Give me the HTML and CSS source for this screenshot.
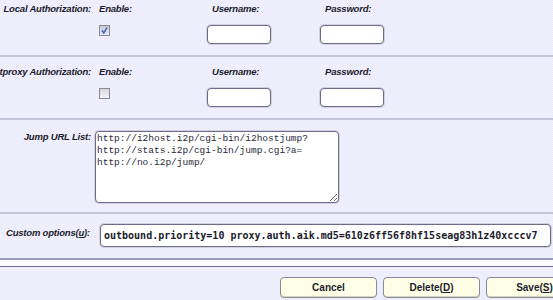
FILE: index.html
```html
<!DOCTYPE html>
<html lang="en">
<head>
  <meta charset="UTF-8">
  <title>Tunnel settings</title>
  <link rel="stylesheet" href="styles.css">
</head>
<body>
  <div class="form">
    <div class="row auth first">
      <div class="label">Local Authorization:</div>
      <div class="head">Enable:</div>
      <div class="head user">Username:</div>
      <div class="head pass">Password:</div>
      <div></div>
      <div class="cell">
        <span class="check on">
          <svg width="9" height="9" viewBox="0 0 9 9"><path d="M2 4.5 L3.8 7 L7 1.5" fill="none" stroke="#3355bb" stroke-width="1.4"/></svg>
        </span>
      </div>
      <div class="cell"><input type="text" class="text"></div>
      <div class="cell"><input type="password" class="text"></div>
    </div>

    <div class="row auth second">
      <div class="label">Outproxy Authorization:</div>
      <div class="head">Enable:</div>
      <div class="head user">Username:</div>
      <div class="head pass">Password:</div>
      <div></div>
      <div class="cell"><span class="check"></span></div>
      <div class="cell"><input type="text" class="text"></div>
      <div class="cell"><input type="password" class="text"></div>
    </div>

    <div class="row jump">
      <div class="label">Jump URL List:</div>
      <textarea class="urls" rows="6">http://i2host.i2p/cgi-bin/i2hostjump?
http://stats.i2p/cgi-bin/jump.cgi?a=
http://no.i2p/jump/</textarea>
    </div>

    <div class="row custom">
      <div class="label">Custom options(<u>u</u>):</div>
      <input type="text" class="options" value="outbound.priority=10 proxy.auth.aik.md5=610z6ff56f8hf15seag83h1z40xcccv7">
    </div>
  </div>

  <div class="bar"></div>

  <div class="buttons">
    <button>Cancel</button>
    <button>Delete(<u>D</u>)</button>
    <button>Save(<u>S</u>)</button>
  </div>
</body>
</html>
```

FILE: styles.css
```css
body {
  margin: 0;
  width: 553px;
  height: 300px;
  overflow: hidden;
  font-family: "Liberation Sans", Arial, sans-serif;
  color: #1c1c2c;
  background-color: #eeeeff;
  background-image: repeating-conic-gradient(#f3f3ff 0 25%, #e9e9fb 0 50%);
  background-size: 2px 2px;
}
.row {
  border-bottom: 2px solid #c4c4d8;
}
.auth {
  display: grid;
  grid-template-columns: 95px 112px 113px 1fr;
  row-gap: 10px;
}
.first {
  padding: 3px 0 11px;
}
.second {
  padding: 9px 0 11px;
}
.label, .head {
  font-size: 9.5px;
  font-weight: bold;
  font-style: italic;
  line-height: 12px;
  letter-spacing: -0.2px;
  white-space: nowrap;
}
.label {
  display: flex;
  justify-content: flex-end;
  padding-right: 4px;
}
.head {
  padding-left: 4px;
}
.head.user, .head.pass {
  padding-left: 5px;
}
.cell {
  height: 19px;
}
.auth .cell:nth-child(6) {
  padding-left: 4px;
}
.check {
  display: flex;
  align-items: center;
  justify-content: center;
  width: 9px;
  height: 9px;
  border: 1px solid #8a8a96;
  background: linear-gradient(#d8d8dc, #f4f4f6);
}
.check.on {
  background: linear-gradient(#c8c8d0, #e8e8ee);
}
.text {
  box-sizing: border-box;
  width: 64px;
  height: 19px;
  margin: 0;
  border: 1px solid #6c6c88;
  border-radius: 4px;
  background: #fff;
  box-shadow: 0 0 0 1px #d0d0e0;
}
.jump {
  display: flex;
  padding: 11px 0 9px;
}
.jump .label {
  width: 91px;
  flex: none;
  align-self: flex-start;
}
.urls {
  box-sizing: border-box;
  width: 244px;
  height: 72px;
  margin: 0;
  padding: 1px 1px;
  border: 1px solid #6c6c88;
  border-radius: 4px;
  box-shadow: 0 0 0 1px #d0d0e0;
  font-family: "Liberation Mono", "Courier New", monospace;
  font-size: 9.5px;
  line-height: 12px;
  color: #2a2a3a;
  resize: both;
}
.custom {
  display: flex;
  padding: 10px 0 11px;
  border-bottom: none;
}
.custom .label {
  width: 95px;
  flex: none;
  align-self: flex-start;
  padding-top: 3px;
  padding-right: 5px;
  box-sizing: border-box;
}
.options {
  box-sizing: border-box;
  width: 451px;
  height: 23px;
  margin: 0 0 0 5px;
  padding: 0 3px;
  border: 1px solid #6c6c88;
  border-radius: 4px;
  box-shadow: 0 0 0 1px #d0d0e0;
  background: #fff;
  font-family: "DejaVu Sans Mono", monospace;
  font-size: 10px;
  font-weight: bold;
  color: #1c1c2c;
}
.bar {
  height: 6px;
  border-top: 2px solid #9a9abb;
  border-bottom: 1px solid #6a6a99;
  background: #fbfbff;
}
.buttons {
  display: flex;
  gap: 6px;
  padding: 10px 0 0 280px;
}
.buttons button {
  flex: none;
  width: 97px;
  height: 21px;
  border: 1px solid #8888a0;
  border-radius: 4px;
  background: #ffffe8;
  box-shadow: inset 0 -1px 0 #d8d8c0;
  font-family: "Liberation Sans", Arial, sans-serif;
  font-size: 10px;
  font-weight: bold;
  color: #1c1c2c;
}
```
